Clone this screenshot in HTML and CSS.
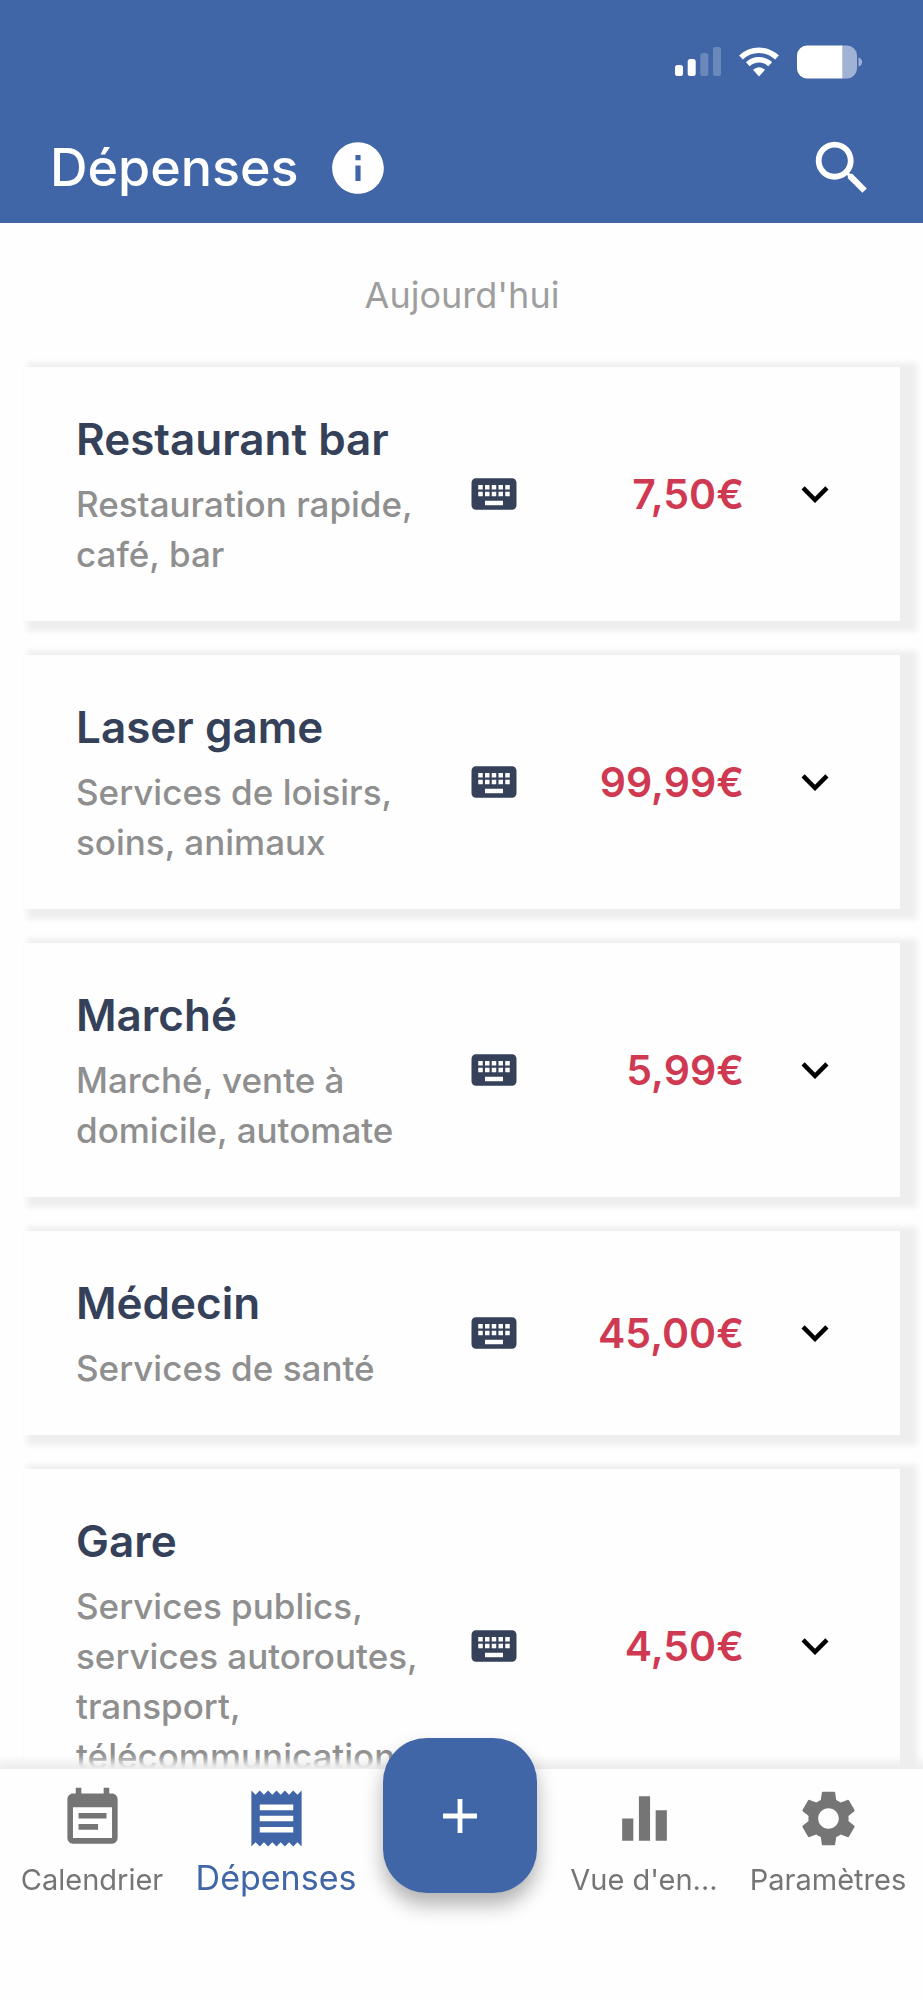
FILE: index.html
```html
<!DOCTYPE html>
<html lang="fr">
<head>
<meta charset="utf-8">
<meta name="viewport" content="width=device-width, initial-scale=1">
<title>Dépenses</title>
<link rel="stylesheet" href="styles.css">
</head>
<body>
<svg class="sprite" aria-hidden="true">
  <symbol id="keyboard" viewBox="0 0 24 24"><path d="M20 5H4c-1.100 0-1.990.9-1.990 2L2 17c0 1.100.9 2 2 2h16c1.100 0 2-.9 2-2V7c0-1.100-.9-2-2-2zm-9 3h2v2h-2V8zm0 3h2v2h-2v-2zM8 8h2v2H8V8zm0 3h2v2H8v-2zm-1 2H5v-2h2v2zm0-3H5V8h2v2zm9 7H8v-2h8v2zm0-4h-2v-2h2v2zm0-3h-2V8h2v2zm3 3h-2v-2h2v2zm0-3h-2V8h2v2z"/></symbol>
  <symbol id="chevron" viewBox="0 0 24 24"><path d="M16.590 8.590 12 13.170 7.410 8.590 6 10l6 6 6-6z"/></symbol>
</svg>
<div class="app">
  <header class="header">
    <div class="status">
      <svg class="status-icon" width="46" height="34" viewBox="0 0 46 34"><rect x="0" y="20" width="8" height="11" rx="2.500"/><rect x="12.700" y="14" width="8" height="17" rx="2.500"/><g opacity=".22"><rect x="25.300" y="8" width="8" height="23" rx="2.500"/><rect x="38" y="2" width="8" height="29" rx="2.500"/></g></svg>
      <svg class="status-icon" width="40" height="34" viewBox="0 0 40 34"><g fill="none" stroke="#fff" stroke-width="5.500"><path d="M2 12.500a26 26 0 0 1 36 0"/><path d="M8.800 19.200a16.300 16.300 0 0 1 22.400 0"/></g><path d="M20 31.500 14 24.800q6-5 12 0z"/></svg>
      <svg class="status-icon" width="66" height="34" viewBox="0 0 66 34"><path d="M10 .5h35.500v33H10a10 10 0 0 1-10-10v-13a10 10 0 0 1 10-10z"/><path opacity=".5" d="M45.500.5H50a10 10 0 0 1 10 10v13a10 10 0 0 1-10 10h-4.500zM61.500 12.500q3.500 1 3.500 4.500t-3.500 4.500z"/></svg>
    </div>
    <div class="titlebar">
      <h1 class="title">Dépenses</h1>
      <button class="icon-button" type="button" aria-label="Informations"><svg width="62" height="62" viewBox="0 0 24 24"><path d="M12 2C6.480 2 2 6.480 2 12s4.480 10 10 10 10-4.480 10-10S17.520 2 12 2zm1 15h-2v-6h2v6zm0-8h-2V7h2v2z"/></svg></button>
      <button class="icon-button search" type="button" aria-label="Rechercher"><svg width="70" height="70" viewBox="0 0 24 24"><path d="M15.500 14h-.79l-.28-.27C15.410 12.590 16 11.110 16 9.500 16 5.910 13.090 3 9.500 3S3 5.910 3 9.500 5.910 16 9.500 16c1.610 0 3.090-.59 4.230-1.570l.27.28v.79l5 4.990L20.490 19l-4.990-5zm-6 0C7.010 14 5 11.990 5 9.500S7.010 5 9.500 5 14 7.010 14 9.500 11.990 14 9.500 14z"/></svg></button>
    </div>
  </header>

  <main class="content">
    <h2 class="day">Aujourd'hui</h2>
    <ul class="list">
      <li class="card">
        <div class="info"><h3 class="name">Restaurant bar</h3><p class="category">Restauration rapide, café, bar</p></div>
        <svg class="source"><use href="#keyboard"/></svg>
        <span class="amount">7,50€</span>
        <button class="expand" type="button" aria-label="Détails de Restaurant bar"><svg class="chevron"><use href="#chevron"/></svg></button>
      </li>
      <li class="card">
        <div class="info"><h3 class="name">Laser game</h3><p class="category">Services de loisirs, soins, animaux</p></div>
        <svg class="source"><use href="#keyboard"/></svg>
        <span class="amount">99,99€</span>
        <button class="expand" type="button" aria-label="Détails de Laser game"><svg class="chevron"><use href="#chevron"/></svg></button>
      </li>
      <li class="card">
        <div class="info"><h3 class="name">Marché</h3><p class="category">Marché, vente à domicile, automate</p></div>
        <svg class="source"><use href="#keyboard"/></svg>
        <span class="amount">5,99€</span>
        <button class="expand" type="button" aria-label="Détails de Marché"><svg class="chevron"><use href="#chevron"/></svg></button>
      </li>
      <li class="card">
        <div class="info"><h3 class="name">Médecin</h3><p class="category">Services de santé</p></div>
        <svg class="source"><use href="#keyboard"/></svg>
        <span class="amount">45,00€</span>
        <button class="expand" type="button" aria-label="Détails de Médecin"><svg class="chevron"><use href="#chevron"/></svg></button>
      </li>
      <li class="card">
        <div class="info"><h3 class="name">Gare</h3><p class="category">Services publics, services autoroutes, transport, télécommunications</p></div>
        <svg class="source"><use href="#keyboard"/></svg>
        <span class="amount">4,50€</span>
        <button class="expand" type="button" aria-label="Détails de Gare"><svg class="chevron"><use href="#chevron"/></svg></button>
      </li>
    </ul>
  </main>

  <nav class="nav">
    <a class="nav-item" href="#calendrier"><svg class="nav-icon" viewBox="0 0 24 24"><path d="M17 10H7v2h10v-2zm2-7h-1V1h-2v2H8V1H6v2H5c-1.110 0-2 .9-2 2v14c0 1.100.89 2 2 2h14c1.100 0 2-.9 2-2V5c0-1.100-.9-2-2-2zm0 16H5V8h14v11zm-5-5H7v2h7v-2z"/></svg><span class="nav-label">Calendrier</span></a>
    <a class="nav-item active" href="#depenses" aria-current="page"><svg class="nav-icon" viewBox="0 0 24 24"><path d="M18 17H6v-2h12v2zm0-4H6v-2h12v2zm0-4H6V7h12v2zM3 22l1.500-1.500L6 22l1.500-1.500L9 22l1.500-1.500L12 22l1.500-1.500L15 22l1.500-1.500L18 22l1.500-1.500L21 22V2l-1.500 1.500L18 2l-1.500 1.500L15 2l-1.500 1.500L12 2l-1.500 1.500L9 2 7.500 3.500 6 2 4.500 3.500 3 2v20z"/></svg><span class="nav-label">Dépenses</span></a>
    <button class="fab" type="button" aria-label="Ajouter une dépense"><svg width="58" height="58" viewBox="0 0 24 24"><path d="M19 13h-6v6h-2v-6H5v-2h6V5h2v6h6v2z"/></svg></button>
    <a class="nav-item" href="#ensemble"><svg class="nav-icon" viewBox="0 0 24 24"><path d="M10 20h4V4h-4v16zm-6 0h4v-8H4v8zM16 9v11h4V9h-4z"/></svg><span class="nav-label">Vue d'en...</span></a>
    <a class="nav-item" href="#parametres"><svg class="nav-icon" viewBox="0 0 24 24"><path d="M19.140 12.940c.04-.3.06-.61.06-.94 0-.32-.02-.64-.07-.94l2.030-1.580c.18-.14.23-.41.12-.61l-1.920-3.320c-.12-.22-.37-.29-.59-.22l-2.390.96c-.5-.38-1.030-.7-1.620-.94l-.36-2.540c-.04-.24-.24-.41-.48-.41h-3.840c-.24 0-.43.17-.47.41l-.36 2.540c-.59.24-1.130.57-1.620.94l-2.390-.96c-.22-.08-.47 0-.59.22L2.740 8.870c-.12.21-.08.47.12.61l2.030 1.580c-.05.3-.09.63-.09.94s.02.64.07.94l-2.030 1.580c-.18.14-.23.41-.12.61l1.920 3.320c.12.22.37.29.59.22l2.390-.96c.5.38 1.030.7 1.620.94l.36 2.540c.05.24.24.41.48.41h3.840c.24 0 .44-.17.47-.41l.36-2.540c.59-.24 1.130-.56 1.620-.94l2.390.96c.22.08.47 0 .59-.22l1.920-3.320c.12-.22.07-.47-.12-.61l-2.010-1.580zM12 15.700c-2.040 0-3.700-1.660-3.700-3.700s1.660-3.700 3.700-3.700 3.700 1.660 3.700 3.700-1.660 3.700-3.700 3.700z"/></svg><span class="nav-label">Paramètres</span></a>
  </nav>
</div>
</body>
</html>
```

FILE: styles.css
```css
* { box-sizing: border-box; margin: 0; padding: 0; }

body {
  font-family: Inter, "Liberation Sans", sans-serif;
  background: #fff;
}

svg { display: block; fill: currentColor; }
button { border: 0; background: none; color: inherit; font: inherit; cursor: pointer; }
.sprite { position: absolute; width: 0; height: 0; }

.app { display: flex; flex-direction: column; height: 100vh; }

/* Header */
.header { flex: none; background: #4166a8; color: #fff; }
.status {
  display: flex;
  justify-content: flex-end;
  align-items: center;
  gap: 18px;
  height: 112px;
  padding: 11px 60px 0 0;
}
.titlebar {
  display: flex;
  align-items: center;
  gap: 28px;
  height: 111px;
  padding: 0 46px 0 50px;
}
.title { font-size: 52px; font-weight: 500; line-height: 60px; }
.search { margin-left: auto; }

/* Expense list */
.content {
  flex: 1;
  min-height: 0;
  overflow-y: auto;
  scrollbar-width: none;
  padding: 51px 23px 32px 24px;
  background: #fefefe;
}
.day {
  margin-bottom: 51px;
  color: #9e9e9e;
  font-size: 36px;
  font-weight: 400;
  line-height: 42px;
  text-align: center;
}
.list { display: flex; flex-direction: column; gap: 34px; list-style: none; }
.card {
  display: grid;
  grid-template-columns: 1fr 54px 223px 98px;
  align-items: center;
  padding: 0 58px 0 52px;
  background: #fefefe;
  box-shadow: 10px 3px 6px 7px #eee;
}
.info { padding: 48px 20px 42px 0; }
.name { margin-bottom: 16px; color: #354059; font-size: 44px; font-weight: 600; line-height: 48px; }
.category { color: #8f8f8f; font-size: 35px; font-weight: 500; line-height: 50px; }
.source { width: 54px; height: 54px; color: #354059; }
.amount { color: #cf3a52; font-size: 41px; font-weight: 600; line-height: 48px; text-align: right; }
.expand { justify-self: end; color: #000; }
.chevron { width: 54px; height: 54px; }

/* Bottom navigation */
.nav {
  position: relative;
  flex: none;
  display: grid;
  grid-template-columns: repeat(5, 1fr);
  min-height: 231px;
  padding-right: 3px;
  background: #fefefe;
  box-shadow: 0 -5px 8px 3px #eee;
}
.nav-item {
  display: flex;
  flex-direction: column;
  align-items: center;
  gap: 10px;
  padding-top: 16px;
  color: #757575;
  text-decoration: none;
}
.nav-icon { width: 67px; height: 67px; }
.nav-label { font-size: 29px; line-height: 36px; white-space: nowrap; }
.active { color: #4166a8; }
.active .nav-label { font-size: 34px; line-height: 32px; }
.fab {
  display: grid;
  place-items: center;
  justify-self: center;
  width: 154px;
  height: 155px;
  margin-top: -31px;
  border-radius: 44px;
  background: #4166a8;
  color: #fff;
  box-shadow: 0 12px 20px rgba(0, 0, 0, 0.3);
}
```
